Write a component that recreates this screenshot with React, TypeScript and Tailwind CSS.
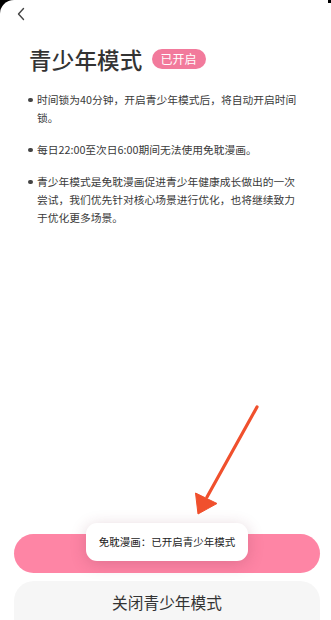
import React from "react";

const font = '"Noto Sans CJK SC", "Noto Sans", sans-serif';

const items = [
  "时间锁为40分钟，开启青少年模式后，将自动开启时间锁。",
  "每日22:00至次日6:00期间无法使用免耽漫画。",
  "青少年模式是免耽漫画促进青少年健康成长做出的一次尝试，我们优先针对核心场景进行优化，也将继续致力于优化更多场景。",
];

export default function App() {
  return (
    <div className="relative w-[331px] h-[620px] overflow-hidden bg-black" style={{ fontFamily: font }}>
      <div className="relative flex flex-col w-full h-full bg-white rounded-tl-[14px]">
        {/* back */}
        <div className="h-[28px] pl-[16px] pt-[7px]">
          <svg width="10" height="14" viewBox="0 0 10 14" fill="none">
            <path d="M7.5 1.5 L2.5 7 L7.5 12.5" stroke="#444" strokeWidth="1.4" strokeLinecap="round" strokeLinejoin="round" />
          </svg>
        </div>
        {/* title */}
        <div className="flex items-center pl-[29px] mt-[15px] h-[32px]">
          <span className="text-[22.5px] leading-[32px] text-[#333] font-medium tracking-[0.2px]">青少年模式</span>
          <span className="ml-[9px] h-[20px] px-[9px] rounded-full bg-[#f27a9c] text-white text-[12px] leading-[20px] flex items-center">已开启</span>
        </div>
        {/* bullets */}
        <div className="mt-[16px] pl-[28px] w-[300px] flex flex-col gap-[14px]">
          {items.map((t, i) => (
            <div key={i} className="flex">
              <div className="w-[9px] shrink-0 pt-[6.5px]">
                <div className="w-[4.5px] h-[4.5px] rounded-full bg-[#444]" />
              </div>
              <p className="text-[10.75px] leading-[18px] text-[#3a3a3a] w-[263px]">{t}</p>
            </div>
          ))}
        </div>
        <div className="flex-1" />
        {/* buttons */}
        <div className="pl-[14px] pr-[11px] flex flex-col">
          <div className="h-[39px] rounded-full bg-[#fe85a5]" />
          <div className="mt-[8px] h-[39px] rounded-t-[20px] bg-[#f6f6f6] flex justify-center pt-[11px]">
            <span className="text-[15.7px] leading-[22px] text-[#333]">关闭青少年模式</span>
          </div>
        </div>

        {/* toast */}
        <div className="absolute left-[86px] top-[523px] w-[162px] h-[38px] rounded-[11px] bg-white shadow-[0_3px_16px_rgba(120,40,70,0.22)] flex items-center justify-center">
          <span className="text-[10.5px] text-[#222] whitespace-nowrap">免耽漫画：已开启青少年模式</span>
        </div>

        {/* arrow */}
        <svg className="absolute left-0 top-0" width="331" height="620" viewBox="0 0 331 620" fill="none">
          <path d="M257 407 L207 497" stroke="#f0502d" strokeWidth="3.2" strokeLinecap="round" />
          <path d="M198 514 L195.5 493 L217 503.5 Z" fill="#f0502d" stroke="#f0502d" strokeWidth="1" strokeLinejoin="round" />
        </svg>
      </div>
      {/* top-right corner sliver */}
      <div className="absolute right-0 top-0 w-[3px] h-[3px] bg-black" />
    </div>
  );
}
